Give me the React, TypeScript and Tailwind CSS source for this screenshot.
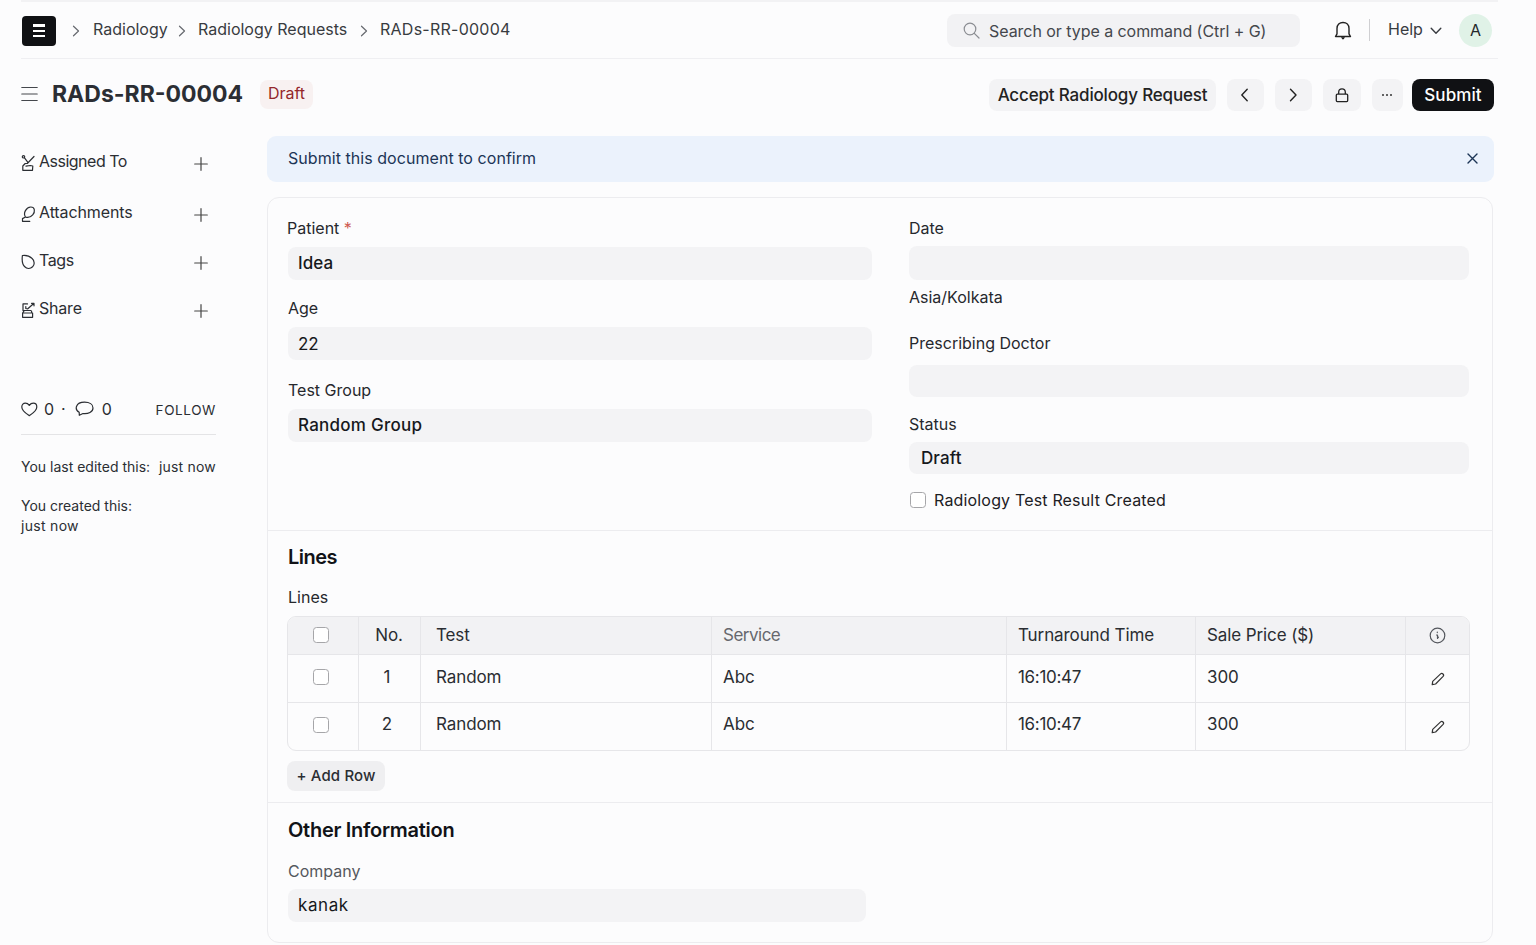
import { useState } from 'react';
import type { ReactNode } from 'react';

interface Line {
  no: number;
  test: string;
  service: string;
  turnaround: string;
  price: string;
}

const LINES: Line[] = [
  { no: 1, test: 'Random', service: 'Abc', turnaround: '16:10:47', price: '300' },
  { no: 2, test: 'Random', service: 'Abc', turnaround: '16:10:47', price: '300' },
];

const GRID = 'grid grid-cols-[70px_62px_291px_295px_189px_210px_1fr]';

// Stroke icon base, drawn at 1:1 with its own view box
function Icon({ w, h, className = '', children }: { w: number; h: number; className?: string; children: ReactNode }) {
  return (
    <svg
      width={w}
      height={h}
      viewBox={`0 0 ${w} ${h}`}
      fill="none"
      stroke="currentColor"
      strokeWidth="1.2"
      strokeLinecap="round"
      strokeLinejoin="round"
      className={`block shrink-0 ${className}`}
    >
      {children}
    </svg>
  );
}

function Crumb({ className }: { className: string }) {
  return (
    <Icon w={8} h={12} className={`text-[#66696f] ${className}`}>
      <path d="M1.5 1.2 6.5 6l-5 4.8" />
    </Icon>
  );
}

function Pencil() {
  return (
    <Icon w={14} h={14} className="text-[#333]">
      <path d="M1.2 12.6 1.7 9.4 9.6 1.9q1.2-1 2.4.1 1.2 1.2.1 2.4L4.6 12z" />
    </Icon>
  );
}

function Checkbox({ className = '' }: { className?: string }) {
  const [on, setOn] = useState(false);
  return (
    <input
      type="checkbox"
      checked={on}
      onChange={() => setOn(!on)}
      className={`block size-4 shrink-0 appearance-none rounded-[3.5px] border border-[#a6a6a9] bg-white checked:bg-gray-800 ${className}`}
    />
  );
}

function Label({ children, className = '' }: { children: ReactNode; className?: string }) {
  return <div className={`h-5 text-[16px] leading-5 text-[#26282d] ${className}`}>{children}</div>;
}

function Field({ value, className = '' }: { value?: string; className?: string }) {
  return (
    <div className={`rounded-[8px] bg-[#f3f3f5] px-2.5 text-[17px] leading-[32px] text-[#16181c] ${className}`}>
      {value}
    </div>
  );
}

function SideItem({ icon, label, className = '' }: { icon: ReactNode; label: string; className?: string }) {
  return (
    <div className={`flex h-5 items-center text-[16px] leading-5 text-[#2b2e33] ${className}`}>
      <span className="mt-1 w-[18px]">{icon}</span>
      <span className="flex-1">{label}</span>
      <Icon w={14} h={14} className="mt-[5px] mr-[8px] text-[#444]">
        <path d="M7 .7v12.6M.7 7h12.6" />
      </Icon>
    </div>
  );
}

function Sidebar() {
  return (
    <aside className="w-[195px] pt-[15px]">
      <SideItem
        label="Assigned To"
        className="tracking-[-0.5px]"
        icon={
          <Icon w={15} h={18}>
            <circle cx="2.5" cy="2.8" r="1.2" />
            <path d="M3.5 3.8 6.5 7.8M13 2.5 6.3 9.5H4.2L1.8 12v4.300h9.700L11.800 12 9.300 11.500 5 12.200" />
          </Icon>
        }
      />
      <SideItem
        label="Attachments"
        className="mt-[31px] tracking-[-0.1px]"
        icon={
          <Icon w={15} h={18}>
            <path d="M4.5 12C1.8 8 5.3 2.3 9.7 2c4.3-.1 4.7 4.8 2 7.8-2 2.3-4.700 3.200-7.200 2.200L1.500 13.600v2.700h7.300" />
          </Icon>
        }
      />
      <SideItem
        label="Tags"
        className="mt-7 tracking-[-0.4px]"
        icon={
          <Icon w={15} h={18}>
            <path d="M1.4 2.5C5.5 2 8.2 2.7 10.9 5.3c2.700 2.400 3 6.500.7 8.500-2.400 2.200-5.800 2-8.100-.3C1.200 11.200.9 6.500 1.400 2.500z" />
          </Icon>
        }
      />
      <SideItem
        label="Share"
        className="mt-7 tracking-[-0.2px]"
        icon={
          <Icon w={15} h={18}>
            <path d="M6.5 2.9H2v6.300M4.800 5.500v2l2 .3L13 2.300M10.500 2.300H13v2.500M2 9.500h7.700q1.200.2 1 2M3.200 9.700 1.600 12v4.300h10V12H2" />
          </Icon>
        }
      />

      <div className="mt-[81px] flex h-5 items-center text-[16px] text-[#2b2e33]">
        <Icon w={17} h={15}>
          <path d="M8.300 13.700C5.500 11.800.8 8.900.8 5 .8 2.600 2.400 1.200 4.300 1.200c1.700 0 3 .8 4 2.200 1-1.400 2.300-2.200 4-2.200 1.900 0 3.500 1.400 3.500 3.800 0 3.900-4.700 6.800-7.500 8.700z" />
        </Icon>
        <span className="ml-[6px]">0</span>
        <span className="ml-[7px]">·</span>
        <Icon w={19} h={16} className="ml-[9px]">
          <path d="M4.200 11.300C-.8 8.500.5 1.200 9.500 1.200c5 0 8.500 2.300 8.500 5.700 0 4-4.700 6.200-10 5.600L4.300 14.300z" />
        </Icon>
        <span className="ml-2">0</span>
        <button className="mt-[3px] ml-auto text-[13.5px] tracking-[0.6px]">FOLLOW</button>
      </div>

      <div className="mt-[15px] border-t border-[#e4e4e6]" />
      <p className="mt-[22px] flex h-5 justify-between text-[14px] leading-5 whitespace-nowrap text-[#2b2e33]">
        <span>You last edited this:</span>
        <span className="tracking-[0.2px]">just now</span>
      </p>
      <p className="mt-[19px] text-[14px] leading-5 text-[#2b2e33]">
        You created this:
        <br />
        <span className="tracking-[0.3px]">just now</span>
      </p>
    </aside>
  );
}

function LinesTable() {
  const cell = 'border-l border-[#e6e6e9]';
  return (
    <div className="h-[135px] w-[1183px] overflow-hidden rounded-[9px] border border-[#e6e6e9] text-[17px] tracking-[-0.1px] text-[#2a2d32]">
      <div className={`${GRID} h-[37px] bg-[#f2f2f4] leading-[37px]`}>
        <div className="flex items-center pb-0.5 pl-[25px]"><Checkbox /></div>
        <div className={`${cell} pr-px text-center`}>No.</div>
        <div className={`${cell} pl-[15px]`}>Test</div>
        <div className={`${cell} pl-[11px] tracking-[-0.5px] text-[#66686d]`}>Service</div>
        <div className={`${cell} pl-[11px]`}>Turnaround Time</div>
        <div className={`${cell} pl-[11px]`}>Sale Price ($)</div>
        <div className={`${cell} flex items-center justify-center pr-px`}>
          <Icon w={17} h={17} className="text-[#55585e]">
            <circle cx="8.5" cy="8.5" r="7.3" />
            <path d="M8.300 5v.6M7.500 8h1v3.400M9.500 10.200l-1 1.200" />
          </Icon>
        </div>
      </div>
      {LINES.map((l) => (
        <div key={l.no} className={`${GRID} h-[48px] border-t border-[#e6e6e9] leading-[44px] last:leading-[43px]`}>
          <div className="flex items-center pb-[3px] pl-[25px]"><Checkbox /></div>
          <div className={`${cell} pr-[5px] text-center`}>{l.no}</div>
          <div className={`${cell} pl-[15px]`}>{l.test}</div>
          <div className={`${cell} pl-[11px]`}>{l.service}</div>
          <div className={`${cell} pl-[11px] tracking-[-0.3px]`}>{l.turnaround}</div>
          <div className={`${cell} pl-[11px]`}>{l.price}</div>
          <div className={`${cell} flex items-center justify-center`}><Pencil /></div>
        </div>
      ))}
    </div>
  );
}

export default function App() {
  const [banner, setBanner] = useState(true);
  const btn = 'flex h-8 items-center justify-center rounded-[8px] bg-[#f3f3f5] text-[#222]';

  return (
    <div className="h-[945px] w-[1536px] overflow-hidden bg-[#fcfcfd] font-['Inter','Liberation_Sans',sans-serif]">
      {/* Navbar */}
      <header className="mr-[38px] ml-[21px] flex h-[59px] items-center border-t-2 border-b border-t-[#f2f2f4] border-b-[#efeff2] pl-px text-[16px] text-[#383b40]">
        <div className="mt-0.5 flex h-[30px] w-[34px] flex-col items-center justify-center gap-[3px] rounded-[4px] bg-[#101114] pb-0.5">
          <span className="h-[3px] w-3 bg-white" />
          <span className="h-[2px] w-3 bg-white" />
          <span className="h-[2px] w-3 bg-white" />
        </div>
        <Crumb className="mt-0.5 ml-4" />
        <span className="-mt-[3px] ml-[13px] w-[75px] whitespace-nowrap">Radiology</span>
        <Crumb className="mt-0.5 ml-[10px]" />
        <span className="-mt-[3px] ml-[12px] w-[150px] whitespace-nowrap">Radiology Requests</span>
        <Crumb className="mt-0.5 ml-[12px]" />
        <span className="-mt-[3px] ml-[12px] tracking-[0.25px] whitespace-nowrap">RADs-RR-00004</span>

        <div className="ml-auto flex h-[33px] w-[353px] items-center rounded-[8px] bg-[#f2f2f4] pl-4">
          <Icon w={17} h={17} className="text-[#8b8d92]">
            <circle cx="7" cy="7" r="5.8" />
            <path d="m11.300 11.300 4.700 4.700" />
          </Icon>
          <span className="mt-0.5 ml-[9px] tracking-[-0.05px] whitespace-nowrap text-[#44474c]">Search or type a command (Ctrl + G)</span>
        </div>
        <Icon w={18} h={20} className="mt-px ml-[34px] text-[#222]">
          <path strokeWidth="1.4" d="M1.500 15.500h15L15 12.800V7.500C15 3.800 12.500 1.500 9 1.500S3 3.800 3 7.500v5.300zM8 16.500q1 2.400 2 0" />
        </Icon>
        <div className="ml-[17px] h-[22px] w-px bg-[#cfcfd2]" />
        <span className="-mt-[3px] ml-[18px] w-[36px]">Help</span>
        <Icon w={12} h={8} className="mt-px ml-[6px]">
          <path strokeWidth="1.4" d="m1.200 1.200 4.800 5 4.800-5" />
        </Icon>
        <div className="mr-[6px] ml-[17px] flex size-[33px] items-center justify-center rounded-full bg-[#e0f2e7] text-[#24272b]">A</div>
      </header>

      {/* Title bar */}
      <div className="mt-5 mr-[42px] ml-[21px] flex h-8 items-center">
        <Icon w={17} h={16} className="-mt-[3px] text-[#44474c]">
          <path d="M.8 1.500h15.400M.8 8h15.400M.8 14.500h15.400" />
        </Icon>
        <h1 className="-mt-0.5 ml-[14px] w-[191px] text-[23px] leading-8 font-bold whitespace-nowrap text-[#2b2e34]">RADs-RR-00004</h1>
        <span className="-mt-0.5 ml-[17px] flex h-[29px] w-[53px] items-center justify-center rounded-[8px] bg-[#f8f1f1] pb-0.5 text-[16px] text-[#94272a]">Draft</span>
        <button className={`${btn} ml-auto w-[227px] pt-px text-[17px] font-medium tracking-[-0.17px] whitespace-nowrap`}>Accept Radiology Request</button>
        <button className={`${btn} ml-[11px] w-[37px]`}>
          <Icon w={9} h={14} className="-ml-0.5"><path strokeWidth="1.4" d="M7.200 1.200 1.800 7l5.400 5.800" /></Icon>
        </button>
        <button className={`${btn} ml-[11px] w-[37px]`}>
          <Icon w={9} h={14}><path strokeWidth="1.4" d="M1.500 1.200 7 7l-5.500 5.800" /></Icon>
        </button>
        <button className={`${btn} ml-[11px] w-[38px]`}>
          <Icon w={14} h={16} className="-ml-px">
            <path strokeWidth="1.3" d="M2.300 7.200h9.400q1 0 1 1v5.400q0 1-1 1H2.300q-1 0-1-1V8.200q0-1 1-1zM3.700 7V5c0-4.300 6.600-4.300 6.600 0v2" />
          </Icon>
        </button>
        <button className={`${btn} ml-[11px] w-[31px] gap-[2px] pr-0.5`}>
          <span className="size-[2px] rounded-full bg-[#333]" />
          <span className="size-[2px] rounded-full bg-[#333]" />
          <span className="size-[2px] rounded-full bg-[#333]" />
        </button>
        <button className="ml-[9px] flex h-8 w-[82px] items-center justify-center rounded-[8px] bg-[#101114] pt-px text-[17px] font-medium tracking-[0.1px] text-white">Submit</button>
      </div>

      <div className="mt-[25px] flex pl-[21px]">
        <Sidebar />

        <main className="ml-[51px] w-[1226px]">
          {banner && (
            <div className="-mr-px flex h-[46px] items-center justify-between rounded-[9px] bg-[#ebf2fc] pr-4 pb-0.5 pl-[21px] text-[16px] tracking-[0.05px] text-[#1c3556]">
              <span>Submit this document to confirm</span>
              <button onClick={() => setBanner(false)}>
                <Icon w={11} h={11}><path strokeWidth="1.4" d="m1 1 9 9M10 1l-9 9" /></Icon>
              </button>
            </div>
          )}

          <div className="mt-[15px] h-[746px] rounded-[12px] border border-[#ececef]">
            <section className="flex h-[333px] border-b border-[#ececef] pt-5 pl-5">
              <div className="w-[584px]">
                <Label className="-ml-px">Patient <span className="text-[#cf5a50]">*</span></Label>
                <Field value="Idea" className="mt-[9px] h-[33px] font-medium tracking-[0.1px]" />
                <Label className="mt-[18px]">Age</Label>
                <Field value="22" className="mt-[9px] h-[33px] pt-px" />
                <Label className="mt-5">Test Group</Label>
                <Field value="Random Group" className="mt-[9px] h-[33px] font-medium tracking-[0.25px]" />
              </div>
              <div className="ml-[37px] w-[560px]">
                <Label>Date</Label>
                <Field className="mt-2 h-[34px]" />
                <Label className="mt-[7px]">Asia/Kolkata</Label>
                <Label className="mt-[26px]">Prescribing Doctor</Label>
                <Field className="mt-[12px] h-[32px]" />
                <Label className="mt-[17px]">Status</Label>
                <Field value="Draft" className="mt-2 h-[32px] pl-3 font-medium tracking-[0.1px]" />
                <div className="mt-4 flex h-5 items-center gap-2">
                  <Checkbox className="ml-px" />
                  <span className="text-[16px] tracking-[0.17px] text-[#1d2024]">Radiology Test Result Created</span>
                </div>
              </div>
            </section>

            <section className="h-[272px] border-b border-[#ececef] pt-[14px] pl-[19px]">
              <h2 className="ml-px h-6 text-[20px] leading-6 font-semibold tracking-[-0.5px] text-[#111317]">Lines</h2>
              <Label className="mt-[18px] mb-[9px] ml-px">Lines</Label>
              <LinesTable />
              <button className="mt-[10px] flex h-[30px] w-[98px] items-center justify-center rounded-[8px] bg-[#efeff1] text-[15px] font-medium tracking-[0.15px] whitespace-nowrap text-[#2b2e33]">
                + Add Row
              </button>
            </section>

            <section className="pt-[15px] pl-5">
              <h2 className="h-6 text-[20px] leading-6 font-semibold tracking-[-0.28px] text-[#111317]">Other Information</h2>
              <Label className="mt-[19px] text-[#55585d]">Company</Label>
              <Field value="kanak" className="mt-2 h-[33px] w-[578px] tracking-[0.6px]" />
            </section>
          </div>
        </main>
      </div>
    </div>
  );
}
